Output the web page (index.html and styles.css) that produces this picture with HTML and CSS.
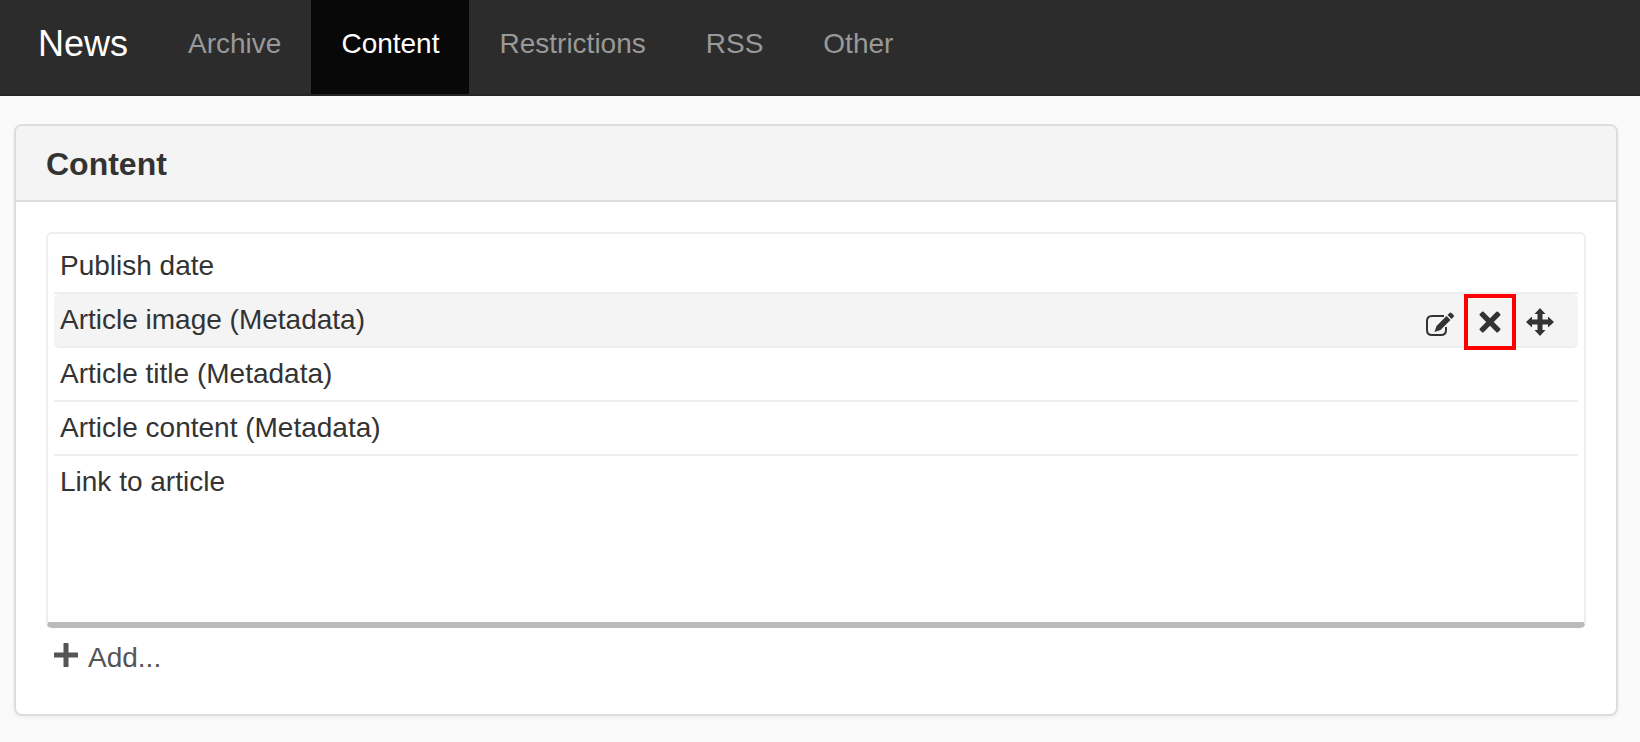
FILE: index.html
```html
<!DOCTYPE html>
<html lang="en">
<head>
  <meta charset="UTF-8" />
  <title>News</title>
  <link rel="stylesheet" href="styles.css">
</head>
<body>
  <nav class="navbar">
    <a class="brand" href="#">News</a>
    <a class="tab" href="#archive">Archive</a>
    <a class="tab active" href="#content">Content</a>
    <a class="tab" href="#restrictions">Restrictions</a>
    <a class="tab" href="#rss">RSS</a>
    <a class="tab" href="#other">Other</a>
  </nav>

  <section class="panel">
    <h2>Content</h2>
    <div class="panel-body">
      <ul class="fields">
        <li>Publish date</li>
        <li class="selected">
          Article image (Metadata)
          <div class="actions">
            <button type="button" aria-label="Edit">
              <svg viewBox="0 0 28 28">
                <path d="M18 8H6Q1 8 1 13V22Q1 27 6 27H15Q20 27 20 22V19" fill="none" stroke="currentColor" stroke-width="2" />
                <path d="M8.500 24L10.500 18L20.500 8L24.500 12L14.500 22ZM21.500 7L23.500 5Q24.500 4 25.500 5L27.500 7Q28.500 8 27.500 9L25.500 11Z" />
              </svg>
            </button>
            <button type="button" class="marked" aria-label="Remove">
              <svg viewBox="0 0 22 22">
                <path d="M3 .8Q3.800 0 4.600.8L11 7.200L17.400.8Q18.200 0 19 .8L21.200 3Q22 3.800 21.200 4.600L14.800 11L21.200 17.400Q22 18.200 21.200 19L19 21.200Q18.200 22 17.400 21.200L11 14.800L4.600 21.200Q3.800 22 3 21.200L.8 19Q0 18.200.8 17.400L7.200 11L.8 4.600Q0 3.800.8 3Z" />
              </svg>
            </button>
            <button type="button" aria-label="Move">
              <svg viewBox="0 0 28 28">
                <path d="M14 0L19.500 6H16.500V11.500H22V8.500L28 14L22 19.500V16.500H16.500V22H19.500L14 28L8.500 22H11.500V16.500H6V19.500L0 14L6 8.500V11.500H11.500V6H8.500Z" />
              </svg>
            </button>
          </div>
        </li>
        <li>Article title (Metadata)</li>
        <li>Article content (Metadata)</li>
        <li>Link to article</li>
      </ul>
      <button type="button" class="add">
        <svg viewBox="0 0 24 24">
          <path d="M10 0h4q.5 0 .5.500v9h9q.5 0 .5.500v4q0 .5-.5.500h-9v9q0 .5-.5.500h-4q-.5 0-.5-.5v-9h-9q-.5 0-.5-.5v-4q0-.5.500-.5h9v-9q0-.5.500-.5z" />
        </svg>
        Add...
      </button>
    </div>
  </section>
</body>
</html>
```
FILE: styles.css
```css
* {
  box-sizing: border-box;
}

body {
  margin: 0;
  background-color: #fafafa;
  color: #333;
  font-family: "Helvetica Neue", Helvetica, "Liberation Sans", Arial, sans-serif;
  font-size: 28px;
}

.navbar {
  display: flex;
  padding-left: 8px;
  background-color: #2c2c2c;
  border-bottom: 2px solid #252525;
}

.navbar a {
  padding: 24px 30px 30px;
  line-height: 40px;
  color: #999;
  text-decoration: none;
}

.navbar .brand {
  font-size: 36px;
  color: #fff;
}

.navbar .active {
  background-color: #080808;
  color: #fff;
}

.panel {
  margin: 28px 22px 24px 14px;
  border: 2px solid #ddd;
  border-radius: 8px;
  background-color: #fff;
  box-shadow: 0 2px 4px rgba(0, 0, 0, 0.05);
}

.panel h2 {
  margin: 0;
  padding: 20px 30px 18px;
  border-bottom: 2px solid #ddd;
  border-radius: 6px 6px 0 0;
  background-color: #f4f4f4;
  font-size: 32px;
  line-height: 36px;
}

.panel-body {
  padding: 30px 30px 36px;
}

.fields {
  min-height: 396px;
  margin: 0;
  padding: 6px;
  border: 2px solid #eee;
  border-bottom: 6px solid #bbb;
  border-radius: 6px;
  list-style: none;
}

.fields li {
  display: flex;
  justify-content: space-between;
  padding: 0 16px 0 6px;
  border-bottom: 2px solid #eee;
  line-height: 52px;
}

.fields li:last-child {
  border-bottom: none;
}

.fields .selected {
  border-radius: 6px;
  background-color: #f4f4f4;
}

.actions {
  display: flex;
  align-items: flex-end;
  gap: 6px;
}

button {
  display: flex;
  align-items: center;
  padding: 0;
  border: none;
  background: none;
  color: inherit;
  font: inherit;
  cursor: pointer;
}

.actions button {
  justify-content: center;
  width: 44px;
  height: 48px;
}

.actions .marked {
  outline: 4px solid #f00;
}

svg {
  width: 28px;
  height: 28px;
  fill: currentColor;
}

.marked svg {
  width: 22px;
  height: 22px;
}

.add {
  gap: 10px;
  margin-top: 10px;
  padding-left: 8px;
  color: #555;
  line-height: 40px;
}

.add svg {
  width: 24px;
  height: 24px;
  margin-bottom: 6px;
}
```
